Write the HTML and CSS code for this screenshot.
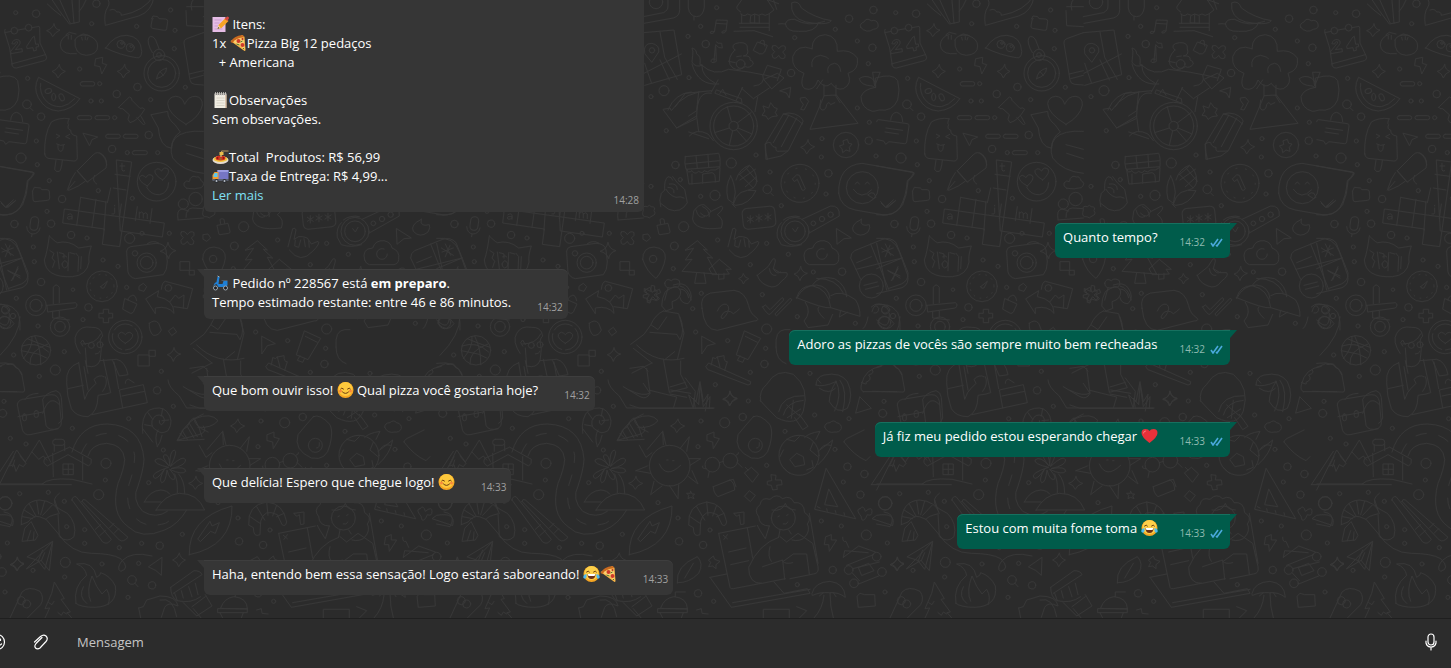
FILE: index.html
```html
<!DOCTYPE html>
<html lang="pt-BR">
<head>
    <meta charset="UTF-8">
    <meta name="viewport" content="width=device-width, initial-scale=1.0">
    <title>Pizzaria</title>
    <link rel="stylesheet" href="styles.css">
</head>
<body>
    <!-- Emoji and icons -->
    <svg class="sprites" aria-hidden="true">
        <symbol id="memo" viewBox="0 0 16 16">
            <path d="M0 1h13v15H0z" fill="#e6bde6"/>
            <path d="M2 4h7M2 7h5M2 10h4M2 13h8" stroke="#c99bd0" stroke-width="1"/>
            <path d="M5 13l1-4 7-7 3 3-7 7z" fill="#f7a325"/>
            <path d="M12 3l2-2q1-1 2 0t0 2l-1 2z" fill="#d8473f"/>
            <path d="M5 13l1-4 2 3z" fill="#f8dcb0"/>
            <path d="M5 13l1-2 1 1z" fill="#333"/>
        </symbol>
        <symbol id="pizza" viewBox="0 0 16 16">
            <path d="M0 6L12 0l2 2 1 13q0 1-1 1z" fill="#f9b548"/>
            <path d="M0 7Q3 1 12 0l2 2Q5 3 2 8z" fill="#c96a20"/>
            <path d="M3 7Q6 3 13 3l1 11z" fill="#fbd070"/>
            <circle cx="8" cy="6" r="2" fill="#cf3a2b"/>
            <circle cx="12" cy="10" r="2" fill="#cf3a2b"/>
            <circle cx="12" cy="4" r="1" fill="#b52f24"/>
            <path d="M6 9l3 1M10 7l2-1M13 13v1" stroke="#4e7b2e"/>
        </symbol>
        <symbol id="notepad" viewBox="0 0 16 16">
            <path d="M2 2h12v14H2z" fill="#f1ede2"/>
            <path d="M4 6h8M4 8.500h8M4 11h8M4 13.500h8" stroke="#cfcabd" stroke-width=".7"/>
            <path d="M2 1h12v2H2z" fill="#8e8b88"/>
            <path d="M3 0v4M5 0v4M7 0v4M9 0v4M11 0v4M13 0v4" stroke="#dedbd4" stroke-width=".7"/>
            <path d="M13 3h1v13h-1z" fill="#c49d7c"/>
        </symbol>
        <symbol id="spaghetti" viewBox="0 0 16 16">
            <ellipse cx="8" cy="11" rx="8" ry="4" fill="#e6dccf"/>
            <ellipse cx="8" cy="10" rx="7" ry="3" fill="#f2c53f"/>
            <ellipse cx="8" cy="9" rx="5" ry="2.500" fill="#d6301d"/>
            <path d="M8 8V3M9 8V2h7" stroke="#b9975f" fill="none"/>
            <path d="M7 3h4v3H7z" fill="#e9bd4d"/>
            <circle cx="5" cy="9" r="1" fill="#8f1a12"/>
            <circle cx="11" cy="9" r="1" fill="#8f1a12"/>
            <path d="M7 10h2" stroke="#54a13b"/>
        </symbol>
        <symbol id="truck" viewBox="0 0 16 16">
            <path d="M5 2h11v9H5z" fill="#7676c4"/>
            <path d="M5 2h11v2H5z" fill="#9a9ae0"/>
            <path d="M0 11V7l2-3h4v8H0z" fill="#f39b2d"/>
            <path d="M1 8l1-3h3v4H1z" fill="#5cc8f0"/>
            <path d="M0 11h16v2H0z" fill="#5a6070"/>
            <circle cx="4" cy="13" r="2" fill="#2a2d33"/>
            <circle cx="12" cy="13" r="2" fill="#2a2d33"/>
            <circle cx="4" cy="13" r="1" fill="#b9c0c8"/>
            <circle cx="12" cy="13" r="1" fill="#b9c0c8"/>
        </symbol>
        <symbol id="scooter" viewBox="0 0 16 16">
            <path d="M5 1l2 1" stroke="#9bb4c4"/>
            <path d="M5 2h2l-1 7h4l1-3h4v4l-1 2H6L4 9q-2 0-3 3 0-4 3-5z" fill="#1f80d6"/>
            <path d="M9 5h6v1H9z" fill="#4d5a66"/>
            <circle cx="3" cy="13" r="2" fill="#1c1f23" stroke="#9ba5ad"/>
            <circle cx="13" cy="13" r="2" fill="#1c1f23" stroke="#9ba5ad"/>
        </symbol>
        <symbol id="smile" viewBox="0 0 16 16">
            <circle cx="8" cy="8" r="8" fill="#f6a623"/>
            <circle cx="8" cy="7" r="7" fill="#fdc93d"/>
            <path d="M3 7q1-2 3 0M10 7q2-2 3 0M5 10q3 3 6 0" stroke="#6b3c10" fill="none" stroke-linecap="round"/>
            <circle cx="3" cy="9" r="1.500" fill="#f58a3c"/>
            <circle cx="13" cy="9" r="1.500" fill="#f58a3c"/>
        </symbol>
        <symbol id="heart" viewBox="0 0 16 16">
            <path d="M8 15Q0 9 0 5 0 1 4 1q3 0 4 2 1-2 4-2 4 0 4 4 0 4-8 10z" fill="#e8313a"/>
            <path d="M2 5q0-2 2-2" stroke="#ff7d7d" fill="none" stroke-linecap="round"/>
        </symbol>
        <symbol id="joy" viewBox="0 0 16 16">
            <circle cx="8" cy="8" r="8" fill="#f6a623"/>
            <circle cx="8" cy="7" r="7" fill="#fdd04a"/>
            <path d="M3 6q2-2 3 0M10 6q2-2 3 0" stroke="#6b3c10" fill="none" stroke-linecap="round"/>
            <path d="M4 8h8q0 5-4 5T4 8z" fill="#6b2f16"/>
            <path d="M4 8h8l-1 2H5z" fill="#fff"/>
            <path d="M3 8Q-1 9 0 12q2 2 3-1zM13 8q4 1 3 4-2 2-3-1z" fill="#4fb9ee"/>
        </symbol>
        <symbol id="ticks" viewBox="0 0 13 9">
            <path d="M1 5l2 3 5-7M6 7l1 1 5-7" fill="none" stroke="#4aa9dc" stroke-width="1.600"/>
        </symbol>
    </svg>

    <main class="chat">
        <svg class="wallpaper" aria-hidden="true">
            <defs>
                <pattern id="doodles" width="440" height="618" patternUnits="userSpaceOnUse" viewBox="0 0 1320 1854">
                    <g id="tile">
                        <!-- top left -->
                        <g>
                            <path d="M14 98l20-4M54 90l22-4M97 83l20-4q2 0 2 6l1 44 18 38q5 11-5 15l-84 22q-9 2-12-7l-8-53-14-45q-2-9 0-11M34 192l102-28"/>
                            <circle cx="43" cy="92" r="10"/><circle cx="86" cy="83" r="10"/>
                            <path d="M36 130q4-14 18-11 12 5 2 18l-10 12 20-3 1 9-34 6-1-7 20-24q3-6-2-5-5 0-6 6zM98 112l-18 27 1 7 18-3 2 10 8-2-1-10 8-1-1-8-8 1-4-23z"/>
                            <path d="M142 12q20 20 40 34M150-10q25 40 58 82l30-6V-10M175-10l35 78M215-10l7 80M258 0q-8 20-20 34"/>
                            <path d="M320-10q12 20 4 30-14 20-8 56l100-28q40-14 46-58M330 30q14-6 20 6 14-2 14 10 70-12 98-60"/>
                            <path d="M208 103q-26 8-27 32 2 24 30 26h18M225 120q-4 44 34 46 34-2 34-28 0-22-30-32-32-4-38 14M198 104l10-7 20 5M240 106l10-4 18 5M205 108v9M214 106v12M245 112l2 8M256 110v9M264 112l-3 8"/>
                            <path d="M317 144q26-40 64-38 42 4 44 48 0 22-16 19-50-8-92-29z"/>
                            <circle cx="363" cy="133" r="12"/><circle cx="391" cy="143" r="12"/><circle cx="366" cy="129" r="4"/><circle cx="394" cy="139" r="4"/>
                            <path d="M455 56l4-8 14 2 4 6 20 1q7 1 6 8l-3 21q0 6-7 5l-36-6q-5-1-4-7l3-16q1-6 3-6z"/>
                            <circle cx="485" cy="220" r="53"/><circle cx="485" cy="220" r="42"/><circle cx="477" cy="165" r="17"/><circle cx="477" cy="165" r="7"/>
                            <path d="M470 236q2-24 30-32-2 24-30 32zM480 215l10 11M457 158q-18-30-10-46 10-8 20 8l10 26"/>
                            <path d="M560 20h50M558 32l2 45 50 3M575 30q-8-36 20-36M610 98l-50 18q-10 4-8 14l18 110q2 12 14 13l26 2M568 222l42-10M572 236l38-10"/>
                            <path d="M288 176l20-4-1 18 13 4-15 28-5-22-15-3z"/>
                            <path d="M115 233q-16 30 0 60 20 38 60 40 42-4 64-36zM122 250q-4 26 12 48 20 24 50 22 22-4 40-24"/>
                            <ellipse cx="145" cy="273" rx="7" ry="10" transform="rotate(70 145 273)"/><ellipse cx="161" cy="291" rx="6" ry="11"/><ellipse cx="185" cy="292" rx="7" ry="11" transform="rotate(-25 185 292)"/>
                            <rect x="241" y="245" width="43" height="13" rx="6"/><rect x="232" y="347" width="43" height="12" rx="6"/><rect x="285" y="347" width="44" height="12" rx="6"/>
                            <rect x="317" y="403" width="44" height="12" rx="6"/><rect x="370" y="403" width="44" height="12" rx="6"/><rect x="397" y="452" width="45" height="12" rx="6"/>
                            <circle cx="81" cy="313" r="13"/><path d="M90 323l9 9"/>
                            <path d="M356 322l32-31q8 1 8 10l24 24q10-4 14 3-20 34-44 40l-6-10 4-14-20-18q-10 2-12-4zM411 353l20 22 4-5-14-24"/>
                            <path d="M558 373q-54-32-55-62 2-20 24-22 20 0 27 24 12-26 34-24 20 4 19 26-6 34-49 58z"/>
                            <path d="M-10 365q0-6 6-6l86 12q6 1 5 7l-7 48q-1 6-7 5l-46-6-10 8-6-10-20-4M32 360q2-22 18-23 18 4 18 28M18 384l50 7M15 396l40 6"/>
                            <path d="M134 462q-2-60 20-96 22-14 54-10-8 14-2 18-6 14 6 16 0 16 18 18l2 64q0 12-12 11l-76-8q-10-4-10-13zM168 480l-4 28q4 10 14 6 6-4 9-33M169 403l11 5-10 6M209 403l-12 7 12 6M170 432q12 8 24 2M174 436q-2 16 8 18 8 0 8-18"/>
                            <path d="M250 400l43 11-17 8-7 17z"/>
                            <path d="M232 512l48-48q12-12 28 0 16 16 10 40l-56 42zM232 512l30 34M226 518l-12 20-11 30q0 4 6 2l26-12 20-14M203 570l22-26M300 460q20 14 20 34M284 526q-10 16 6 26"/>
                            <path d="M350 480l45 6-36 254-52-7 6-46-125-18 5-42 300 42-6 42-125-18zM242 592l-12 84M242 592l75 14M318 604l-6 86M345 523l45 6M340 564l38 6M288 598l-12 84M332 564l-10 44M364 612l-6 44M412 620l-6 42M456 626l-6 44"/>
                            <path d="M204 644q10-6 12 2v12M216 650q-14-2-14 4 2 8 14 0M344 624v14q0 6-8 4M344 616v2M418 654v-18M418 640q8-8 12 0v14M430 642q8-8 12 0v14M366 490v20q2 6 8 2M360 498h14"/>
                            <circle cx="470" cy="545" r="58"/><path d="M442 558q-26-14-24-26 8-12 20 1 6-14 19-6 8 10-15 31zM488 540q-26-16-23-28 8-12 20 1 6-14 19-6 8 12-16 33zM440 562q14 24 38 22 26-4 28-36"/>
                            <path d="M454 344l49-10q0 24 22 40l16 22q-26 16-26 49-36-4-40-60zM610 394q-60-4-84 20-20 26-8 60 30 40 92 46M558 434l52 14M560 460l50 16"/>
                            <path d="M-10 498l112 20q4 4-18 26-2 40-16 70-24 40-78 30M2 605l16 18 28-20M20 618l6-4M560 565q-12-6-8-16 8-10 16-4 4-22 22-14 8-4 14 12 14 6 0 20-20 6-44 2z"/>
                            <path d="M98 572l5-10 18 2 5 5h15q7 0 7 7l1 18q0 6-6 7l-38 4q-6 0-6-6z"/>
                            <rect x="91" y="650" width="24" height="41" rx="12" transform="rotate(8 103 670)"/><path d="M80 680q2 20 18 22 18 0 22-18M96 702l-1 8"/>
                            <circle cx="550" cy="612" r="15"/><circle cx="587" cy="597" r="20"/><path d="M534 658q-6-28 12-31l20 6M558 652q0-28 20-28l30 2M534 660l76-6"/>
                            <path d="M-10 715q52-6 68 40l24 68q8 30-16 40l-76 18M-10 806l76-32M-10 730l30 140M4 744l36 22M30 736l-14 34M24 812l36 22M54 806l-20 36"/>
                            <path d="M148 708q16 16 24 20 36-8 64 16l38-6q-10 30-7 48-6 40-50 44-80 4-84-50 8-20 15-72zM150 752l12 8-6 14 8 10-6 18M172 756l6 50M206 758l-2 54M228 760l8 10-2 44M244 770l-2 36M178 758l14 4 0 12M210 758l14 4M186 792q8-20 18 0-2 12-10 12-8-2-8-12M188 770q8-6 12 0"/>
                            <path d="M380 752q2-10 12-12l76-10q26 0 30 20l4 36q0 24-12 38l-84 12q-18-4-22-20zM442 731q16-12 34-2M504 728q4 20 24 24-20 6-22 24-6-18-26-22 20-6 24-26z"/>
                            <circle cx="440" cy="788" r="29"/><circle cx="440" cy="788" r="19"/><circle cx="405" cy="760" r="8"/>
                            <path d="M544 696q10-6 18 8 10-14 20-6 4 8-8 16 12 10 6 18-12 6-18-8-10 14-18 6-6-8 6-17-12-10-6-17zM541 785h28v26h-28zM569 811h14v14h-14z"/>
                            <circle cx="306" cy="859" r="46"/><circle cx="306" cy="859" r="36" stroke-dasharray="2 18"/><path d="M302 860l20-16-10 20q-8 4-10-4z"/>
                            <path d="M375 896l36 16-10 22q-4 8-10 6l-22-12zM384 900q0-10 14-14 8-2 12 16M438 896l38-24-4 18q50 8 50 50-18-24-56-16v16zM484 868q2-22 12-24l82 22-16 60-40-6M510 905l16-20 10 10 16-10-2 40"/>
                            <circle cx="505" cy="864" r="10"/>
                            <circle cx="108" cy="916" r="31"/><circle cx="108" cy="916" r="18"/><path d="M142 916l84-8q10 6 0 16l-82 12zM160 912v-50q8-14 18 0v46M158 934v20l50 6M178 932v20"/>
                            <circle cx="17" cy="930" r="12"/><circle cx="39" cy="948" r="8"/><circle cx="14" cy="968" r="18"/><path d="M-10 914q40-4 56 16 16 10 14 60"/>
                            <path d="M298 940h12v-12h16v12h12v14h-12v14h-16v-14h-12zM418 858l12-8 10 10-8 14-14-4z"/>
                        </g>
                        <!-- top right -->
                        <g transform="translate(600)">
                            <path d="M12 70l88-16q20-6 19-26V-10M10 50l60-12q14-6 14-20V-10M145-10v34q4 24 24 26 20 0 24-28v-32M162 50v10"/><circle cx="48" cy="6" r="20"/>
                            <path d="M285-5l34 0M302 36q-16-10-10-18l20-28M302 42q10 10 20 0 14 8 22 0 12 8 22 0 10 8 20 0l16-12-20-30M305 42v28M388 42v50M298 70h88M300 82h86M282 94l60-2 56 18M332 48l-2 20 28 2V48M344 44v24M370-5l46 16M400-2l10 30"/>
                            <path d="M222 95q-14-4-10 5 8 2 11-4l6-36 33 1-4 32q-14-2-12 6 8 2 12-5M228 70l32 2"/>
                            <path d="M456 8q20-8 28 16 40 30 90 38-6 12-50 8-60-4-68-40zM416 72q10-2 20 0 4-16 28-14 40 24 90 6M436 72q4 24 40 22 50 4 60-26"/>
                            <path d="M662 82q-4-12 10-16 6-14 22-4 16-4 20 10 4 14-14 16-20 14-38-6z"/>
                            <path d="M10 98l92-8 23 134L14 256M12 220l112-58M60 96l14 76 38 66M60 180l28 60M14 190l20 58M14 160q-6-30 22-30 24 6 20 26l-20 30z"/><circle cx="36" cy="151" r="8"/>
                            <path d="M225 178q-12-4-12 6 4 8 16 0l-2-50q8 12 20 10l-2-14q-12 2-16-4M222 184l4-44"/>
                            <path d="M186 196q-20 8-30-10l2-20q2-12-2-22 14 4 14 18 14 6 10 30zM186 196q36 34 80 12l60 8 42 8q10 30-26 34M186 198q-2 30 40 52M156 192q18 66 80 60M234 240l-20 36M304 264l36 32 48-32M308 262l-20 40"/>
                            <path d="M284 150q-16-18 14-22 26-2 24 18 6 20-12 22 24-2 20 12 10 2 10 12-12 14-24 8-30 20-46-6-8-20 14-44zM266 184l20 4M290 170l14-2"/><circle cx="302" cy="192" r="13"/>
                            <path d="M340 150l12-24 30 10-8 20q-6 8-14 6zM360 128q2-10 12-6l2 16M370 224l12-28 42 12-12 34M370 224l42 10M372 238l40-18 20 14-36 32z"/>
                            <path d="M398 138q10-6 18 8 10-14 20-6 4 8-8 16 12 10 6 18-12 6-18-8-10 14-18 6-6-8 6-17-12-10-6-17z"/>
                            <path d="M516 146q0-40 40-42 38 4 36 50 40-8 60 20 6 36-28 46 14 32-14 46-22 6-36-16-20 20-40-10-12 36-40 26-16-12-2-46-38-14-34-50 14-40 58-24M516 200q-6-30 26-34 20 4 24 10M564 218q-6-24 20-28 16 2 18 24M548 240l-18 26M552 288v-34M588 286v-30M552 288l-42 100 144-18-64-84zM542 300q-6 30 6 30 10 0 12-16 6-12 12 0l12-6M586 286l14 22"/>
                            <path d="M706 262q-36 6-43 28 0 34 34 44 8 0 20-4 40 6 56-30 8-30 0-58-14-24-66-8zM706 262q4-16-12-28-20-10-36 2 4 20 38 22zM698 218l6 40 16-40z"/>
                            <path d="M70 328l20-4 4 8q40-60 120-60M70 330l40 54 58-28M84 330q20-50 70-54M106 320l30-40 40-4M110 384l60-36M176 276l-6 56-24 16M214 280q-44-10-44 70l6 44M226 280l80 30-2-14-74-26zM240 280l8-12 10 18M146 396l60 20M148 408q20-24 56-6l16 20M345 335l8-44"/>
                            <circle cx="281" cy="378" r="71"/><circle cx="281" cy="378" r="60"/><circle cx="281" cy="378" r="14"/><path d="M274 364l-12-44M293 368l40-30M294 384l42 18M278 392l-10 44M268 384l-44 14M290 390l30 34"/>
                            <path d="M420 272l32-10-4 32-8-14zM370 318l16 6 6-16 10 14 10 4-6 12 6 10-16 2-12 8-6-10-12-2 8-12zM482 294l14-2 10 12-14 26-10-2 8-14-8-12z"/>
                            <path d="M376 432l54-90q16-6 34 0 24 10 25 22l-44 88-22 16-44 10zM430 342q30 4 58 30M376 432q10-8 16-4 4 14 16 14-2 14 10 12l24-1M376 432q0 26 6 46M400 428l46-82M424 440l46-86"/>
                            <circle cx="618" cy="435" r="38"/><path d="M610 422l12-4 4 12 10 2-8 10 2 12-12-4-10 8-2-12-8-8 12-4z"/>
                            <path d="M136 470l100-10q6 12 4 40l-102 8q-6-20-2-38zM136 492l102-10M168 468l4 36M204 464l2 36M140 508q4 14 16 4 8 14 20 2 12 8 16-2 12 8 20-2 14 4 28-8l-2 42-90 8zM188 550v-28l28-4q12 2 10 28M156 522v30"/>
                            <path d="M62 620q-6-20 2-40l10-10q-2-30 10-40 12 0 14 10M98 530q10 18 36 38l8 40q-20 34-56 20l-24-18M78 568q10 18 30 24 14-4 24 2M84 562q20 0 18 16M88 552q24-4 24 16"/>
                            <path d="M272 528q-18 30-8 70l16 12 6-32q-4-34-14-50zM280 612q12-50 68-40-20 42-60 44zM288 540q10-34 40-44 20 14 22 44 0 24-24 30M300 524l40 40M318 504l34 40M346 508l-46 32M350 530l-34 30M328 498l-30 26M276 612l10 10"/>
                            <circle cx="480" cy="550" r="57"/><circle cx="480" cy="550" r="46" stroke-dasharray="3 26"/><path d="M458 536l12-12 8 2 18 40q-4 8-10 4l-14-32-8 6z"/><circle cx="382" cy="568" r="13"/><path d="M391 578l9 9"/>
                            <path d="M596 580q-2-84 70-90l152 26q8 4-16 26-4 50-22 80-20 26-54 22l-80-14q-44-8-50-50zM724 610l12 12 24-22M740 620l4 2 22-20M684 584q10-10 18-4l6 12q-8 8-14 0z"/><circle cx="667" cy="563" r="48"/><path d="M646 552q6-12 12 0M676 552q6-12 12 0M640 568q24 34 54 2"/>
                            <path d="M162 632q14-20 30-18l22 20 30-16q12 6-12 26 22 14 12 40-80 10-86-26zM168 630q8 30 26 20M188 620q20 8 20 30M182 640q20 20 30-6"/>
                            <rect x="308" y="622" width="98" height="62" rx="14" transform="rotate(-6 357 653)"/><path d="M331 647v22M322 652l18 12M340 652l-18 12M357 643v22M348 648l18 12M366 648l-18 12M384 640v22M375 645l18 12M393 645l-18 12"/>
                            <circle cx="465" cy="694" r="42"/><circle cx="465" cy="694" r="31"/><path d="M458 686l8 10 8-14M486 658l86-40q28-2 26 30l-92 52M424 668q-16 16-12 44l12 22q30 10 60 0M430 660q20-16 48-10"/><circle cx="520" cy="670" r="7"/><circle cx="546" cy="657" r="8"/><circle cx="572" cy="644" r="8"/>
                            <path d="M664 658q-34 16-24 36 20 22 44 2 8-14 4-22-30 8-24-16zM590 686l44 28-22 2-20 16zM52 676l32-6 6 24q0 6-4 6l-26 4q-4 0-4-4zM62 672l-2-14q6-4 12 0l2 12M10 704l14-2 8 12-12 10-10-6z"/>
                            <path d="M10 628q-4-12 12-8 6-8 12 0 14 0 8 12 8 12-6 16-8 10-16 2-14 2-12-12zM264 740l14-54q8-4 10 4l-6 28 14-8 12 0 14 4 12 18 20-8q8 6-16 30-36 40-70-4M286 720l-2 18 12 4 6-22M312 716l4 24M326 722l2 20"/>
                            <path d="M8 778q0-36 34-37 36 4 34 34-6 36-28 60-28-20-40-57z"/><circle cx="39" cy="777" r="11"/>
                            <path d="M136 750l36-28 30 28-12-2 28 26-16-2 28 50-104-8 30-36-20 2 24-34zM170 818l-6 32 34 0-6-32M208 806l30-28 36 30-16 0 10 14-50 2zM236 822v16l16-2v-16"/>
                            <path d="M494 780q-10-34 24-36 8-24 34-22 20 4 24 22 24 8 20 34 0 12-14 16l-74 0q-10-2-14-14z"/><circle cx="546" cy="762" r="16" stroke-dasharray="80 20"/>
                            <path d="M632 774q0-16 12-22l84-34q24-8 40 10l36 90q2 24-20 34l-40 14M632 774l30 64M648 808l138-34M692 732l54 136M650 788l44-18M726 756l34-12M736 732l16 34M744 812l36 16M774 800l-16 40"/><circle cx="694" cy="858" r="36"/><path d="M672 856l40-10M676 868l40-10"/>
                            <path d="M352 826l32-26 14-22q8-6 8 6l-6 22 20 12 20 0q8 8-16 26-16 24-40 14-26-10-32-32zM388 806q4 24 20 20M400 806q10 20 22 10M14 866l18 8 2-18 10 2 0 16 14-6 4 10-14 6 10 12-8 6-12-12-10 14-8-6 8-14-14-8z"/>
                            <path d="M74 850q4-18 20-8 10-10 24 0 6 20-14 20-30 8-30-12zM84 864l-10 36M120 858q24 4 34 42M470 895q20-40 60-40 36 4 40 40M518 854q20-30 66-18 34 20 36 54"/>
                        </g>
                        <!-- bottom left -->
                        <g transform="translate(0 960)">
                            <circle cx="108" cy="91" r="44"/><path d="M66 78q44-16 80 18M96 50q4 30-26 66M82 56q32 14 68 26M90 132q-4-40 54-60M104 48q20 40 18 86M64 92l50 10 26 12"/>
                            <circle cx="180" cy="20" r="29"/><circle cx="180" cy="20" r="16"/><circle cx="376" cy="51" r="50"/><circle cx="376" cy="51" r="39" stroke-dasharray="60 12"/><path d="M376 70q-24-14-21-26 8-14 21 0 12-14 22 0 2 12-22 26z"/>
                            <path d="M240 100q-24-36-10-60 14-24 44-18 30-2 34 26-6 4-8 16l4 24-4 34q-10 24-40 16l-4-54M248 78l-6-10 6-8 8 14M248 72q40 0 54-30M256 122l8 38M300 94q-2 8-14 8"/><circle cx="274" cy="76" r="9"/><circle cx="300" cy="74" r="9"/>
                            <path d="M236 128q-40 14-36 60 0 40 14 78 14 24 50 24 30-14 30-64l24-4 14-4-22-100M236 128l18 110q8-24 20-34l14-14-6-12q16-16 30-8M252 140l12 70M204 206l46-10M300 122l50-4q26 6 34 46l-26 4-20-46M276 284l166-36-12-54-72 16 10 54M356 206l-14-80M376 190q0-12 10-12l16 10M366 228l68-14M316 170q10 20-8 44"/>
                            <path d="M415 105h33v33h-33zM448 91h18v18h-18zM448 10q16-14 28 0l8 20q-8 18-24 16-14-12-12-36zM506 32l14-10 10 14-14 10z"/>
                            <path d="M-10 130q60-10 76 36l8 44q0 6-6 6l-90-2M-10 142l20-8q6-6 14 0 20-8 22 8 18 8 20 22M0 106q60-60 60-116M-10 0q40 40 38-20"/>
                            <path d="M52 254q0-12 16-16l86-14q20 0 24 20l6 64q0 16-18 20l-76 16q-16 2-22-12zM76 238q6-16 38-18M128 238q10-20 40-26 14 4 16 20l4 62q-4 12-12 16M128 240l10 76q8 18 36 10M128 280q20-60 50-26M54 290l76-14"/><rect x="68" y="282" width="11" height="20" rx="5"/><rect x="103" y="272" width="12" height="20" rx="5"/>
                            <path d="M-10 510l60-120 26 36 42-66 34 66M-10 492h140M60 408l18 22-8 10-12-6-10 20-6-20-14 4 14-28M96 396l20 22 14-10 10 12M126 492q20-20 90-14l60 14M160 470l-2-70M248 480v-70M134 416q-8 12 8 22l62-34 62 34q10-6 8-20l-64-36zM163 394v-20M194 392v-20"/><rect x="158" y="358" width="36" height="18" rx="8"/><rect x="190" y="432" width="30" height="32"/><path d="M205 432v32M190 448h30"/>
                            <path d="M216 396q24-84 106-84 102 4 110 106-2 34-18 80-20 40 14 76 40 24 74 0M264 408q10-36 56-38 50 4 54 48-2 30-20 72-24 90 30 130 40 40 110 10 40-16 66-60"/><path stroke-dasharray="32 38" d="M244 400q24-60 80-60 70 6 80 66 0 40-18 90-10 50 10 84 30 50 100 30 20-10 30-30"/>
                            <path d="M428 340q-6-50 20-70 34-14 52 4 24 28 4 58-20 12-32 0-20-8-16-30 10-24 32-14 12 18-4 26-8-2-6-12M472 380q10-12 14-34M458 366l-30-40M444 278l14 20M488 266l-4 22M506 300l-20 2M434 314l22 4M472 380q-10-30 2-50"/>
                            <path d="M532 360l10-18q10-20 20-22 10-26 24-26l24-12M532 362l80-4M540 340l14 14M562 320l20 34M586 300q12 20 20 50"/>
                            <path d="M505 442q-44-10-40-22 16-14 42 18-26-32-12-34 14 0 14 34 0-46 14-48 12 4-12 50 40-38 46-20 0 16-44 26 44-8 44 8-10 12-48-6 22 24 14 30-14 4-22-28-4 38-16 38-10-8 8-40-24 36-32 24-10-12 44-30M524 462q10 20 8 56M536 462q18 20 18 58M433 546q16-34 50-36 20 2 26 12M468 570h146q-20-50-76-50-44 4-70 50zM433 546h50"/>
                            <path d="M64 614q-2-70 54-74 50 4 60 40M64 614l20-8q16-20 34-16l20 8q6-10 34-16M68 590l30 6M72 570l32 20M88 552l20 36M110 542l6 40M134 544l-12 40M156 556l-28 30M138 598l36 42q40 60 100 60 60 0 88 16 30 30 0 38-14-8 4-32 30-30 90-14M74 626l-8 38 40-4 8-14-20-40zM82 662l10-30M100 660l2-24M178 520q-24 16-10 40 14 10 34 20 30 30 20 70-20 20-44 0l-4-70M164 540l10 30"/>
                            <path d="M216 540l92 126q14 10 26-8l-106-128q-10-2-12 10zM246 544l112 116q12 8 26-8l-128-112q-8-6-10 4zM286 628l16-14M300 646l16-14M328 624l14-14M342 640l14-14"/>
                            <path d="M80 746l78-82-10 88-24-30zM124 722l10-24M446 740l40-28-2 54-16-14zM228 850q-10-50 32-84-4-24-30-34 50-10 60 40 14-8 12-14 30 10 44 40 8 60-60 64-44 0-58-12zM272 844q-14-30 4-76 14 36 30 54l14-14q14 24 4 46M250 800q-16 30 10 50"/>
                            <circle cx="396" cy="780" r="13"/><path d="M405 790l9 10"/>
                            <path d="M30 894l36-78q20-20 54-2 14 20 2 40l-44 44M135 894l14-30-14 2 20-46 8-34 30 50-10 2 28 38-10 2 20 22M146 848l10 6 6-10M174 878l10 8 6-10 10 6M416 864l14-4 10-20 40-12q50 0 54 30-30-14-40 4l-10 30M416 864l6 30"/><circle cx="64" cy="842" r="12"/><circle cx="80" cy="852" r="12"/>
                            <path d="M512 802q0 30 20 40 40 10 70-12M512 802l70-50q20 0 24 12l-86 56M524 820l8 22M544 812l6 22M566 800l10 30M586 790l8 34M576 860l40-30M580 866l30 36M12 576q30 4 24 30l-6 14-40-8"/><circle cx="16" cy="550" r="20"/>
                        </g>
                        <!-- bottom right -->
                        <g transform="translate(570 855)">
                            <path d="M60 8l6 14 12-8 4 8-10 8 12 8-6 8-14-4-4 12-8-2 0-12-12-2 0-8 12-2-6-12z"/>
                            <path d="M98 40l8-20 16-10q20-14 30 8 2 24-26 32l2 20-20 8-12-14zM130 0q30-10 44 8 20 30 0 48-20 0-24-18M150 12q20 0 26 26M100 78q-24 10-38 42l-20 28-40 30M100 78l46 8 16 58-20 80M60 142l80 6M64 120l20 14 26-38M20 180q60 60 142 40M10 190l56 44M150 96q16 40 0 68l-10-16M100 222l18 100 54-14-20-40v-40M66 234l-60 30M50 250l10 74q-20 12-60-8M120 306l46-14M60 316l80 20-10 34M0 360l30 10h220M190 370l-14-40 22 20 12-60 10 60 14-22-8 50M0 250l40-6 14 14M134 200l-30 24"/>
                            <path d="M216 70q-8-36 26-46l70-8q34 4 44 46 4 24 26 38 4 8-10 8l-110 28q-40 0-46-66zM262 78q10-24 28-20 14 10-4 36-14 14-12 0 8-20 28-14l8 6q8-4 18-14"/>
                            <path d="M398 66l8-6 14 14 36-36q8 2 4 8l-40 42q-8 2-22-22zM436 86l44-46q8 2 4 8l-44 44z"/>
                            <path d="M500 38q10-36 46-36 50 10 56 66-20 4-102-30zM526 52q20 30-4 56l12 20 60-8 14-32M566 66q-10 10 16 34M602 32q30-20 74 12 14 20 14 50l-88-26M632 76l-4 20 24-14M560-20q60 0 80 44M726 80q8-30 20-10 0 16-14 14M758 64q14 0 18 14-10 14-22 0M748 100q20-20 44 16-20 30-48 0zM700 130q10-10 14-34M724 66q20-20 50 0"/>
                            <path d="M344 138l48 22-38 64-34-14zM346 154l36 18M330 212l-8 14 16 6 6-12M216 154l40 22-24 6-16 24zM228 244l8-10 126 56q2 10-8 10l-120-46zM244 240l4-22q10 6 14-2l20-4q0 20 10 18l-8 26M262 216l8 30"/>
                            <path d="M438 186q-4-50 26-52h16M438 186q0 40 30 50"/>
                            <path d="M392 348q-6-30 18-50 30-50 80-30 50 40 30 110-20 50-80 20-30-30-48-50zM446 380q10-50 76-48M460 390q10-40 60-44M490 346l-6 54M470 360l40 34M512 372l-40 26M494 398l24 36 16-10-26-36"/>
                            <path d="M558 300q0-24 24-30 50-10 70 20 20 40 0 80-30 20-54-20 0-30 20-60M558 300q20 8 60-10M568 310q30 20 48 0M618 288q20 40-4 90M630 286q24 30 8 94M562 282l10 12M700 320q-10-4-6-20 10-50 60-56M700 320h100M694 292q20 10 14 0 20-8 8-22 20-6 10-16M690 336l34 34-46 14z"/>
                        </g>
                        <g transform="translate(480 1140)">
                            <path d="M24 0q0 20 34 48l22 36h262M70 20l50 30q20 10 30-10l-20-30M212 30l60 10M210 42l50 10M280 84l6-50-30-40M286 84l-6-30 16 20 4-60 10 66 20-30-2 34"/>
                            <path d="M390 36q4 18 22 20-18 6-24 22-4-16-20-20 18-4 22-22zM234 118q4 16 20 20-18 6-24 20-4-16-18-20 16-6 22-20z"/>
                            <path d="M54 180l14-30 20-22 16-12q50-20 70 6-20 24-60 20M54 180l56-14q36-8 20-28M68 154l14 24M88 130l24 40M104 116q-6 20 40 40"/>
                            <path d="M148 257a61 61 0 1 0 122 0a61 61 0 1 0-122 0M142 208l46-54 10 42M188 154l2 40M118 196l20 36 18-14M108 272l34-14M108 272l44 8M162 304l-10 40 34-26M208 316l26 40 2-42M266 290l28 22-18-40M268 236l34 0-32 20M240 206l28-36-8 44M178 252q20 46 64 4M200 240h4M218 242h4"/>
                            <path d="M322 164l20-8 0 16 16 4-18 30-2-20-16-4zM460 110q20-10 50 24 10 20 0 60-10 50-56 40-54-24-40-70 24-30 46-54zM445 196a21 21 0 1 0 42 0a21 21 0 1 0-42 0M470 204q10 0 8-16"/>
                            <circle cx="337" cy="254" r="22"/><circle cx="391" cy="242" r="22"/><path d="M358 248l12-4M318 266q-14 0-10-8M328 274l-4 18M408 226q10-4 8-8M412 248l14 14M434 278l20-16 22 20-18 24zM444 270l-8-8M340 320l50-20q14 8 14 30l-50 20q-14-10-14-30zM384 302l16-4 8 22M514 284l14 2-2 14 18 0 2 14-16 2 2 12-14 2-4-14-12-2 0-10 12-2zM434 348l14-16 18 14-14 18zM272 334l4 8 8 0-6 6 4 8-10-4-8 4 2-10-6-6 10 0z"/>
                            <circle cx="597" cy="226" r="60"/><path d="M570 238l20-18 20 10 4 24-28 6zM560 178l24 6 14-14M540 230l10-20M548 260l20 20M640 186l-10 24 24 20M620 270l20-8-4-20M614 172q10-12 46-18l-12 24M654 214q40-30 44-34-6 40-44 74M662 206q10-16 30-10M674 142q0-14 16-14 10-10 20 0 16 4 14 18-6 12-20 10-20 6-30-14M732 186q0-8 20-16l40-20M732 186q30 40 66 56l12-12"/>
                            <path d="M678 266l-34 122 122 28zM686 328l-12 46 38 6zM652 380l8 4M680 386l2 8M706 392l2 8M732 398l2 8M780 386q10-14 16 8 20-16 20 0 0 16-14 10-8 20-16 16-2-14-8-18-10-16 2-16z"/>
                            <path d="M814 314l66-100M814 314h240M884 240l-6 20M876 436l-60-20 14-10q60-10 48 30z"/><circle cx="855" cy="370" r="20"/>
                            <path d="M88 524q-4-110 128-146 2 120-128 146zM114 476l36-52 6 14 22-10-12 32-14-6-30 30zM266 434q-4-60 54-68 50 4 60 60-4 16-14 8l-14-30q-40-20-50 20l-2 40q-20 10-20-20zM270 410l30 20M290 380l24 40M320 366l4 40M350 376l-12 32M372 400l-22 10M402 400l30-4 0 36-10 2-4-30q-10 10-16-4"/>
                            <path d="M508 438q-30 0-32-28-16-20 4-36 4-24 30-16 20-20 38-2 24-12 34 12 30-4 32 30 24 14 8 34 10 20-8 40-14 14-38 8M508 438l-12 38q-20-30-24-40M514 414a36 36 0 1 0 72 0a36 36 0 1 0-72 0M516 390q30 6 40-20 6 20 30 20M534 410l4-2M560 406l4-2M550 432q8 4 14-6M540 450l-4 20M566 450l8 12M540 470l20 16 34-26 44 30 16 70q4 20-14 22l-70 14M536 472q-60 20-90 90 0 50 40 48l70-14M510 500q-8 30 4 44M488 560l60-20 6 58M550 544l30-22 40 0 8 60M548 544q10 10 30 4M628 400l26 150M356 460l110-22M356 460l34 162q2 6 10 4l84-16M370 466l12 10M382 464l-10 14M386 516l52-12M392 554l54-12M442 444l16 90M330 592l64 90 236-42-8-14-70 14-30-34M398 668l232-40M330 592l50-10"/>
                            <path d="M678 470l16-6 0 16 16 0-22 34-2-20-12 0zM728 472q0 16 10 12l8 18M730 532l46-34 50 18M730 532l4-20 70 6"/><circle cx="746" cy="570" r="13"/><circle cx="762" cy="610" r="13"/><circle cx="830" cy="530" r="13"/><circle cx="846" cy="576" r="13"/><path d="M740 556l80-32M776 612l60-24M758 580l20 22M776 562l30-12 16 22-36 14zM758 566l80-20M232 608q-6-50 60-78 20 20 4 50-30 30-64 28zM254 594l26-44M326 540l14-12 4 10 16 6-12 10 0 12-10-8-12 2 6-12z"/>
                            <path d="M636 640q8-34 54-36 44 6 46 48-20-16-48-14-30-2-50 8zM672 646q-4 40-30 68M690 640q0 40 10 74M658 648l12-10M708 650l-8-12M772 648l8-8 14 4 30 0 2 34-50 4zM922 530l76-46-24 84-20-26zM954 544l14-34M892 534q4 14 20 16-16 8-22 22-4-14-20-18 16-4 22-20z"/>
                            <path d="M182 684q10-30 40-34 40 4 40 36zM174 686h88v12h-88zM180 698l8 16M250 698l-6 16M226 650v-14h30M490 714v-26h78v26M290 690l14-4 2 14 18 2M590 680l30 12-22 22M70 668l40 40 46-30-20-34M0 660q40-10 50 50"/>
                        </g>
                        <!-- stars and bubbles -->
                        <path d="M162 72q4 18 18 18-16 8-22 20-4-14-18-18 18-6 22-20zM178 194q2 16 18 20-16 6-22 20-4-14-18-20 16-4 22-20zM374 194q2 16 16 20-16 6-20 20-4-14-18-20 16-4 22-20zM1104 420q2 16 20 20-18 6-24 22-4-16-18-20 18-6 22-22zM1082 800q4 18 20 20-18 6-22 22-4-16-18-20 16-4 20-22zM910 822q4 12 16 14-12 4-16 16-2-12-14-16 12-4 14-14zM522 1044q4 16 20 18-18 6-22 22-4-16-18-20 16-4 20-20zM588 1430q4 16 20 20-18 6-22 18-6-14-20-18 18-6 22-20zM52 1672q4 16 20 20-16 6-20 20-4-14-18-20 16-6 18-20zM538 1660q4 16 18 20-14 6-20 20-4-16-18-20 16-6 20-20zM870 1174q4 18 20 20-16 6-20 22-4-16-20-20 18-4 20-22z"/>
                        <g>
                            <circle cx="47" cy="38" r="6"/><circle cx="108" cy="41" r="11"/><circle cx="289" cy="11" r="11"/><circle cx="275" cy="71" r="6"/><circle cx="410" cy="79" r="6"/><circle cx="512" cy="30" r="6"/><circle cx="525" cy="91" r="6"/><circle cx="523" cy="146" r="6"/><circle cx="239" cy="207" r="6"/><circle cx="83" cy="235" r="6"/><circle cx="299" cy="251" r="6"/><circle cx="412" cy="261" r="11"/><circle cx="350" cy="282" r="11"/><circle cx="273" cy="303" r="6"/><circle cx="304" cy="303" r="6"/><circle cx="452" cy="299" r="6"/><circle cx="556" cy="262" r="6"/><circle cx="123" cy="350" r="11"/><circle cx="344" cy="353" r="6"/><circle cx="109" cy="423" r="6"/><circle cx="446" cy="405" r="11"/><circle cx="336" cy="447" r="11"/><circle cx="382" cy="458" r="6"/><circle cx="473" cy="458" r="6"/><circle cx="63" cy="474" r="15"/><circle cx="112" cy="494" r="6"/><circle cx="148" cy="542" r="6"/><circle cx="295" cy="572" r="6"/><circle cx="186" cy="597" r="11"/><circle cx="397" cy="595" r="6"/><circle cx="141" cy="634" r="6"/><circle cx="43" cy="672" r="11"/><circle cx="153" cy="671" r="11"/><circle cx="213" cy="705" r="11"/><circle cx="261" cy="714" r="6"/><circle cx="389" cy="715" r="15"/><circle cx="426" cy="700" r="6"/><circle cx="508" cy="700" r="6"/><circle cx="100" cy="741" r="6"/><circle cx="103" cy="785" r="6"/><circle cx="309" cy="780" r="6"/><circle cx="354" cy="799" r="6"/><circle cx="123" cy="846" r="11"/><circle cx="219" cy="869" r="5"/><circle cx="380" cy="862" r="6"/><circle cx="49" cy="895" r="6"/><circle cx="265" cy="922" r="11"/><circle cx="249" cy="959" r="6"/><circle cx="114" cy="978" r="6"/>
                            <circle cx="830" cy="23" r="6"/><circle cx="1227" cy="56" r="11"/><circle cx="1300" cy="30" r="11"/><circle cx="782" cy="79" r="6"/><circle cx="744" cy="109" r="6"/><circle cx="797" cy="132" r="11"/><circle cx="1064" cy="113" r="6"/><circle cx="1186" cy="88" r="6"/><circle cx="1252" cy="123" r="6"/><circle cx="1297" cy="143" r="11"/><circle cx="1285" cy="191" r="6"/><circle cx="1053" cy="219" r="11"/><circle cx="747" cy="233" r="6"/><circle cx="672" cy="272" r="15"/><circle cx="633" cy="290" r="6"/><circle cx="679" cy="392" r="6"/><circle cx="1252" cy="324" r="6"/><circle cx="1288" cy="367" r="6"/><circle cx="1286" cy="422" r="11"/><circle cx="1146" cy="416" r="6"/><circle cx="948" cy="465" r="6"/><circle cx="874" cy="489" r="15"/><circle cx="706" cy="495" r="11"/><circle cx="1144" cy="471" r="6"/><circle cx="1308" cy="468" r="6"/><circle cx="990" cy="516" r="6"/><circle cx="1165" cy="520" r="11"/><circle cx="721" cy="539" r="6"/><circle cx="633" cy="559" r="6"/><circle cx="825" cy="586" r="15"/><circle cx="782" cy="589" r="6"/><circle cx="1158" cy="582" r="6"/><circle cx="1024" cy="617" r="6"/><circle cx="731" cy="680" r="15"/><circle cx="703" cy="738" r="12"/><circle cx="833" cy="720" r="6"/><circle cx="980" cy="730" r="6"/><circle cx="1045" cy="763" r="6"/><circle cx="931" cy="794" r="6"/><circle cx="1120" cy="816" r="6"/><circle cx="1206" cy="815" r="11"/><circle cx="700" cy="806" r="6"/><circle cx="967" cy="884" r="6"/><circle cx="784" cy="880" r="6"/>
                            <circle cx="193" cy="1055" r="6"/><circle cx="41" cy="1065" r="6"/><circle cx="166" cy="1110" r="15"/><circle cx="118" cy="1129" r="6"/><circle cx="484" cy="1114" r="6"/><circle cx="471" cy="1171" r="11"/><circle cx="12" cy="1204" r="6"/><circle cx="8" cy="1240" r="12"/><circle cx="520" cy="1219" r="6"/><circle cx="386" cy="1256" r="6"/><circle cx="217" cy="1285" r="6"/><circle cx="31" cy="1315" r="6"/><circle cx="78" cy="1332" r="6"/><circle cx="318" cy="1390" r="15"/><circle cx="490" cy="1350" r="6"/><circle cx="316" cy="1440" r="6"/><circle cx="446" cy="1448" r="6"/><circle cx="296" cy="1484" r="15"/><circle cx="59" cy="1481" r="6"/><circle cx="145" cy="1477" r="6"/><circle cx="193" cy="1504" r="6"/><circle cx="200" cy="1580" r="6"/><circle cx="254" cy="1589" r="6"/><circle cx="254" cy="1630" r="6"/><circle cx="358" cy="1643" r="6"/><circle cx="425" cy="1630" r="6"/><circle cx="479" cy="1637" r="11"/><circle cx="547" cy="1603" r="6"/><circle cx="22" cy="1629" r="6"/><circle cx="196" cy="1687" r="15"/><circle cx="99" cy="1711" r="6"/><circle cx="194" cy="1731" r="6"/><circle cx="306" cy="1692" r="6"/><circle cx="416" cy="1690" r="6"/><circle cx="456" cy="1756" r="11"/><circle cx="384" cy="1792" r="6"/><circle cx="15" cy="1776" r="6"/>
                            <circle cx="758" cy="926" r="6"/><circle cx="767" cy="996" r="6"/><circle cx="863" cy="1022" r="6"/><circle cx="980" cy="987" r="15"/><circle cx="977" cy="1045" r="6"/><circle cx="973" cy="1092" r="11"/><circle cx="931" cy="1117" r="6"/><circle cx="826" cy="1154" r="6"/><circle cx="925" cy="1203" r="6"/><circle cx="1072" cy="950" r="6"/><circle cx="1110" cy="1120" r="6"/><circle cx="1246" cy="970" r="6"/><circle cx="783" cy="1263" r="6"/><circle cx="854" cy="1268" r="15"/><circle cx="908" cy="1251" r="11"/><circle cx="774" cy="1340" r="6"/><circle cx="1035" cy="1294" r="6"/><circle cx="1124" cy="1245" r="6"/><circle cx="1227" cy="1256" r="6"/><circle cx="980" cy="1396" r="6"/><circle cx="1185" cy="1348" r="6"/><circle cx="1222" cy="1400" r="11"/><circle cx="1273" cy="1422" r="11"/><circle cx="1210" cy="1446" r="6"/><circle cx="1261" cy="1484" r="11"/><circle cx="654" cy="1508" r="6"/><circle cx="714" cy="1554" r="6"/><circle cx="717" cy="1624" r="11"/><circle cx="789" cy="1635" r="11"/><circle cx="810" cy="1590" r="6"/><circle cx="1144" cy="1563" r="6"/><circle cx="1204" cy="1578" r="6"/><circle cx="1279" cy="1605" r="15"/><circle cx="1178" cy="1710" r="11"/><circle cx="1072" cy="1754" r="6"/><circle cx="774" cy="1780" r="11"/><circle cx="821" cy="1804" r="6"/>
                        </g>
                    </g>
                    <use href="#tile" x="-1320"/>
                    <use href="#tile" x="1320"/>
                </pattern>
            </defs>
            <rect width="100%" height="100%" fill="url(#doodles)"/>
        </svg>

        <article class="bubble in order">
            <div class="text">
                <p><br></p>
                <p><svg class="emoji" role="img" aria-label="📝"><use href="#memo"/></svg> Itens:</p>
                <p>1x <svg class="emoji" role="img" aria-label="🍕"><use href="#pizza"/></svg>Pizza Big 12 pedaços</p>
                <p>  + Americana</p>
                <p><br></p>
                <p><svg class="emoji" role="img" aria-label="🗒"><use href="#notepad"/></svg>Observações</p>
                <p>Sem observações.</p>
                <p><br></p>
                <p><svg class="emoji" role="img" aria-label="🍝"><use href="#spaghetti"/></svg>Total  Produtos: R$ 56,99</p>
                <p><svg class="emoji" role="img" aria-label="🚚"><use href="#truck"/></svg>Taxa de Entrega: R$ 4,99...</p>
                <p><a href="#">Ler mais</a></p>
            </div>
            <time>14:28</time>
        </article>

        <article class="bubble out tail">
            <div class="text">
                <p>Quanto tempo?</p>
            </div>
            <time>14:32</time>
            <svg class="ticks"><use href="#ticks"/></svg>
        </article>

        <article class="bubble in tail">
            <div class="text">
                <p><svg class="emoji" role="img" aria-label="🛵"><use href="#scooter"/></svg> Pedido nº 228567 está <strong>em preparo</strong>.</p>
                <p>Tempo estimado restante: entre 46 e 86 minutos.</p>
            </div>
            <time>14:32</time>
        </article>

        <article class="bubble out tail">
            <div class="text">
                <p>Adoro as pizzas de vocês são sempre muito bem recheadas</p>
            </div>
            <time>14:32</time>
            <svg class="ticks"><use href="#ticks"/></svg>
        </article>

        <article class="bubble in tail">
            <div class="text">
                <p>Que bom ouvir isso! <svg class="emoji" role="img" aria-label="😊"><use href="#smile"/></svg> Qual pizza você gostaria hoje?</p>
            </div>
            <time>14:32</time>
        </article>

        <article class="bubble out tail">
            <div class="text">
                <p>Já fiz meu pedido estou esperando chegar <svg class="emoji" role="img" aria-label="❤"><use href="#heart"/></svg></p>
            </div>
            <time>14:33</time>
            <svg class="ticks"><use href="#ticks"/></svg>
        </article>

        <article class="bubble in tail">
            <div class="text">
                <p>Que delícia! Espero que chegue logo! <svg class="emoji" role="img" aria-label="😊"><use href="#smile"/></svg></p>
            </div>
            <time>14:33</time>
        </article>

        <article class="bubble out tail">
            <div class="text">
                <p>Estou com muita fome toma <svg class="emoji" role="img" aria-label="😂"><use href="#joy"/></svg></p>
            </div>
            <time>14:33</time>
            <svg class="ticks"><use href="#ticks"/></svg>
        </article>

        <article class="bubble in tail">
            <div class="text">
                <p>Haha, entendo bem essa sensação! Logo estará saboreando! <svg class="emoji" role="img" aria-label="😂"><use href="#joy"/></svg><svg class="emoji" role="img" aria-label="🍕"><use href="#pizza"/></svg></p>
            </div>
            <time>14:33</time>
        </article>
    </main>

    <form class="composer">
        <button type="button" aria-label="Emoji">
            <svg viewBox="0 0 18 18"><circle cx="9" cy="9" r="7.500"/><path d="M5 11q4 4 8.500 0M6 6v1.500M12.500 6v1.500"/></svg>
        </button>
        <button type="button" aria-label="Anexar">
            <svg viewBox="0 0 18 18"><path d="M2.500 9L8.500 3.500q3-2.500 5.500-.5 2.500 2.500 0 5.500l-6 6.500q-2.500 1.800-4.500 0-1.500-2 .5-4.500l6-6"/></svg>
        </button>
        <input type="text" placeholder="Mensagem" aria-label="Mensagem">
        <button type="button" class="mic" aria-label="Gravar áudio">
            <svg viewBox="0 0 18 18"><rect x="6" y="1" width="6" height="11" rx="3"/><path d="M4 8v2q1 4 5 4t5-4V8M9 14v3"/></svg>
        </button>
    </form>
</body>
</html>
```
FILE: styles.css
```css
* {
    box-sizing: border-box;
}

body {
    display: flex;
    flex-direction: column;
    height: 100vh;
    margin: 0;
    overflow: hidden;
    background-color: #2b2b2b;
    color: #fff;
    font-family: "Open Sans", "Noto Sans", sans-serif;
    font-size: 13px;
    line-height: 19px;
}

.sprites {
    display: none;
}

/* Conversation */
.chat {
    position: relative;
    flex: 1;
    min-height: 0;
    display: flex;
    flex-direction: column;
    justify-content: flex-end;
    gap: 11px;
    padding: 0 221px 23px 204px;
    overflow: hidden;
}

.wallpaper {
    position: absolute;
    inset: 0;
    width: 100%;
    height: 100%;
}

.wallpaper pattern {
    fill: none;
    stroke: #373737;
    stroke-width: 3;
    stroke-linejoin: round;
    stroke-linecap: round;
}

.bubble {
    position: relative;
    display: flex;
    flex-shrink: 0;
    align-items: flex-end;
    padding: 5px 5px 10px 8px;
    border-radius: 6px;
}

.bubble:has(p + p) {
    padding-bottom: 6px;
}

.in {
    align-self: flex-start;
    background-color: #363636;
    box-shadow: inset 0 1px #3e3e3e;
}

.out {
    align-self: flex-end;
    padding-right: 7px;
    background-color: #005c4b;
    box-shadow: inset 0 1px #17705f;
}

.order {
    width: 440px;
}

.in.tail {
    border-top-left-radius: 0;
}

.out.tail {
    border-top-right-radius: 0;
}

.tail::before {
    content: "";
    position: absolute;
    top: 0;
    width: 7px;
    height: 8px;
    background-color: inherit;
}

.in.tail::before {
    right: 100%;
    clip-path: polygon(0 0, 100% 0, 100% 100%);
}

.out.tail::before {
    left: 100%;
    clip-path: polygon(0 0, 100% 0, 0 100%);
}

.text {
    flex: 1;
    padding-bottom: 1px;
}

.text p {
    margin: 0;
    white-space: pre-wrap;
}

.text a {
    color: #7fe0f5;
    text-decoration: none;
}

.bubble time {
    margin-left: 26px;
    color: #a0a0a0;
    font-size: 10px;
    line-height: 11px;
}

.out time {
    margin-left: 22px;
    color: #8fbab0;
}

.emoji {
    width: 17px;
    height: 16px;
    vertical-align: -3px;
}

.ticks {
    width: 13px;
    height: 9px;
    margin: 0 0 1px 5px;
}

/* Message box */
.composer {
    display: flex;
    height: 50px;
    margin-left: -25px;
    padding-bottom: 3px;
    border-top: 1px solid #1f1f1f;
    background-color: #2c2c2c;
}

.composer button {
    display: flex;
    align-items: center;
    justify-content: center;
    width: 44px;
    padding: 0;
    border: none;
    background: none;
    cursor: pointer;
}

.composer .mic {
    width: 40px;
}

.composer svg {
    width: 18px;
    height: 18px;
    fill: none;
    stroke: #fff;
    stroke-width: 1.200;
    stroke-linecap: round;
}

.composer input {
    flex: 1;
    min-width: 0;
    padding: 0 14px;
    border: none;
    outline: none;
    background: none;
    color: #fff;
    font: inherit;
}

.composer input::placeholder {
    color: #c5c5c5;
}
```
